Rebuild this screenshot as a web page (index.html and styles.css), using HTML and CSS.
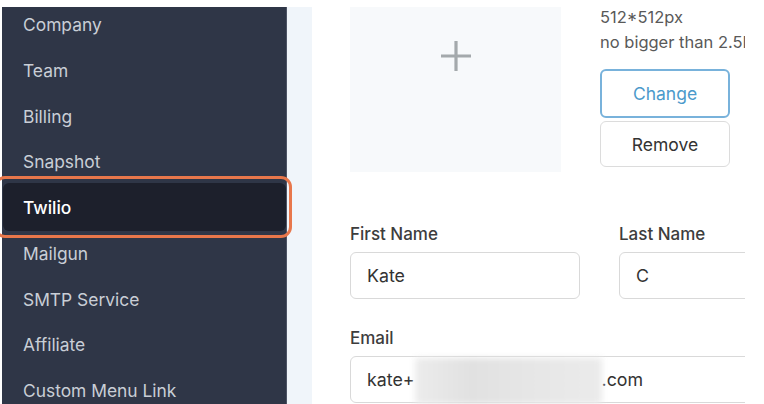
FILE: index.html
```html
<!DOCTYPE html>
<html>
<head>
<meta charset="utf-8">
<link rel="stylesheet" href="styles.css">
</head>
<body>
<div class="app">
  <aside class="sidebar">
    <ul class="nav">
      <li class="nav-item">Company</li>
      <li class="nav-item">Team</li>
      <li class="nav-item">Billing</li>
      <li class="nav-item">Snapshot</li>
      <li class="nav-item active"><span class="nav-text">Twilio</span><span class="highlight"></span></li>
      <li class="nav-item">Mailgun</li>
      <li class="nav-item">SMTP Service</li>
      <li class="nav-item">Affiliate</li>
      <li class="nav-item">Custom Menu Link</li>
    </ul>
  </aside>
  <div class="gutter"></div>
  <main class="main">
    <section class="avatar-row">
      <div class="upload">
        <svg class="plus" width="32" height="32" viewBox="0 0 32 32"><path d="M16 1v30M1 16h30" stroke="#a4a9ac" stroke-width="3.2" fill="none"/></svg>
      </div>
      <div class="avatar-info">
        <p class="hint">512*512px</p>
        <p class="hint">no bigger than 2.5MB</p>
        <button class="btn btn-change">Change</button>
        <button class="btn btn-remove">Remove</button>
      </div>
    </section>
    <section class="form">
      <div class="row">
        <div class="field first">
          <label class="label">First Name</label>
          <div class="input">Kate</div>
        </div>
        <div class="field last">
          <label class="label">Last Name</label>
          <div class="input">C</div>
        </div>
      </div>
      <div class="field email">
        <label class="label">Email</label>
        <div class="input">kate+<span class="blur"></span>.com</div>
      </div>
    </section>
  </main>
  <div class="outside"></div>
</div>
</body>
</html>
```
FILE: styles.css
```css
* { box-sizing: border-box; }
html, body { margin: 0; padding: 0; }
body {
  background: #ffffff;
  font-family: Inter, "Noto Sans", sans-serif;
  width: 764px;
  height: 404px;
  overflow: hidden;
}
.app {
  display: flex;
  margin-top: 7px;
  height: 397px;
}
.sidebar {
  width: 285px;
  margin-left: 2px;
  background: #2f3647;
  border-right: 1px solid #4e5566;
  flex-shrink: 0;
}
.nav {
  list-style: none;
  margin: -5px 0 0 0;
  padding: 0;
}
.nav-item {
  position: relative;
  height: 45.75px;
  line-height: 45.75px;
  padding-left: 21px;
  font-size: 17.4px;
  color: #c9ced6;
}
.nav-item.active {
  color: #ffffff;
  font-weight: 500;
}
.nav-item.active::before {
  content: "";
  position: absolute;
  left: 1px;
  right: 0;
  top: -2px;
  bottom: 0;
  background: #1d202c;
  border-radius: 6px;
}
.nav-text {
  position: relative;
}
.highlight {
  position: absolute;
  left: -8px;
  right: -6px;
  top: -9px;
  bottom: -7px;
  border: 3px solid #e8774b;
  border-radius: 11px;
}
.gutter {
  width: 25px;
  background: #f0f5fa;
  flex-shrink: 0;
}
.main {
  width: 433px;
  overflow: hidden;
  padding-left: 38px;
  flex-shrink: 0;
}
.outside { flex: 1; background: #fff; }
.avatar-row {
  display: flex;
  gap: 39px;
}
.upload {
  width: 211px;
  height: 165px;
  flex-shrink: 0;
  background: #f7f9fb;
  display: flex;
  justify-content: center;
  padding-top: 33px;
}
.plus { display: block; }
.avatar-info {
  margin-top: -2.5px;
  width: 200px;
  flex-shrink: 0;
  white-space: nowrap;
}
.hint {
  margin: 0;
  font-size: 16.5px;
  line-height: 25px;
  color: #595959;
}
.btn {
  display: block;
  width: 130px;
  font-family: inherit;
  font-size: 17.5px;
  background: #fff;
  border-radius: 6px;
  padding: 0;
}
.btn-change {
  margin-top: 14.5px;
  height: 49px;
  border: 2px solid #78b2db;
  color: #4b9acb;
}
.btn-remove {
  margin-top: 3px;
  height: 46px;
  border: 1px solid #dcdcdc;
  color: #333333;
}
.form { margin-top: 52px; }
.row {
  display: flex;
  gap: 39px;
}
.field.first { width: 230px; flex-shrink: 0; }
.field.last { width: 200px; flex-shrink: 0; }
.field.email { margin-top: 29px; width: 460px; }
.label {
  display: block;
  font-size: 17px;
  font-weight: 500;
  line-height: 20px;
  color: #3d3d3d;
  margin-bottom: 8px;
}
.input {
  height: 47px;
  border: 1px solid #d9d9d9;
  border-radius: 6px;
  padding-left: 16px;
  font-size: 17.8px;
  line-height: 45px;
  color: #333333;
  display: flex;
  align-items: center;
}
.blur {
  display: inline-block;
  width: 187px;
  height: 46px;
  margin-top: 2px;
  background: linear-gradient(90deg, #ececec, #e1e1e1 30%, #e6e6e6 60%, #ebebeb);
  filter: blur(3px);
}
```
